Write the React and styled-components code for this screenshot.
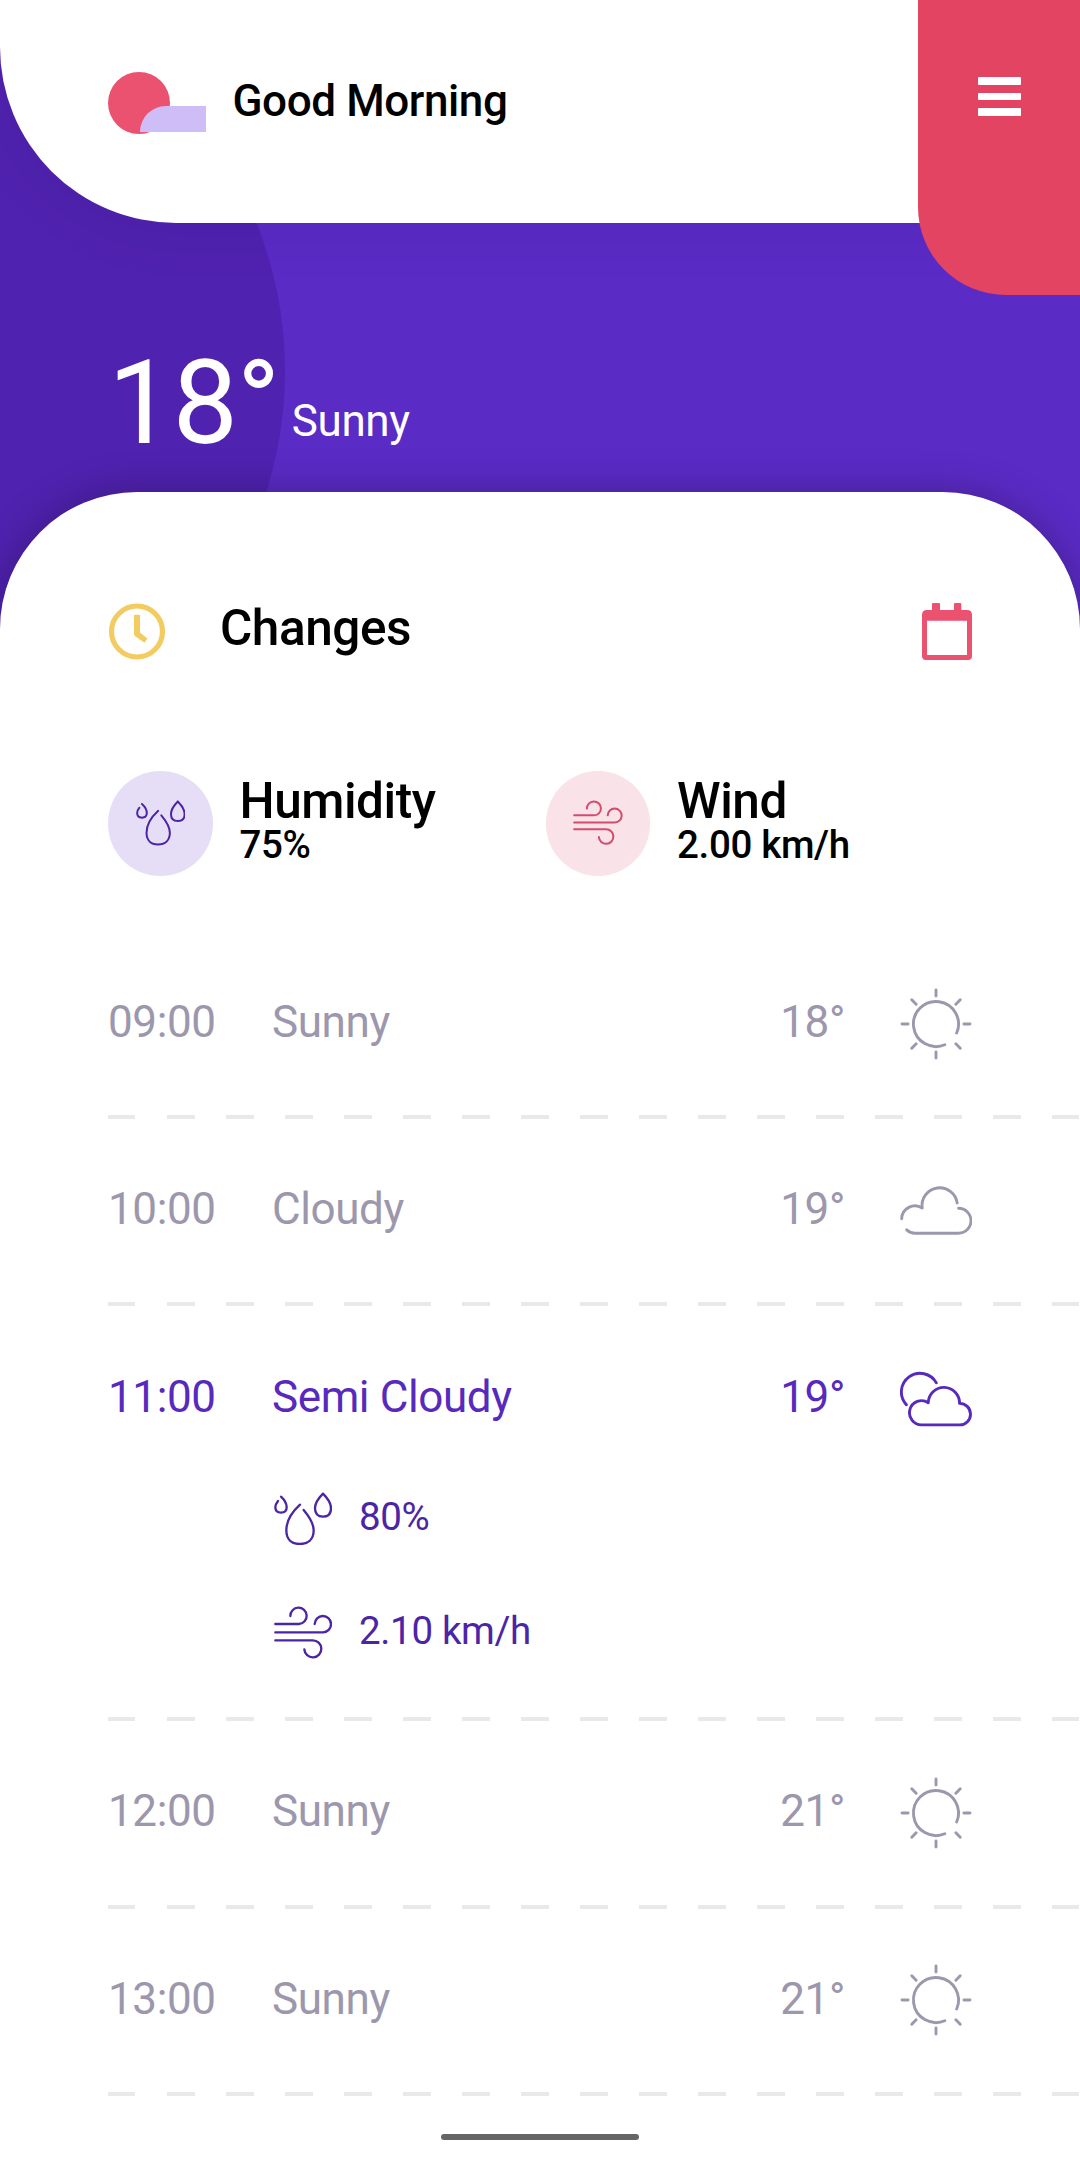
import React from "react";
import styled, { createGlobalStyle } from "styled-components";

const GlobalStyle = createGlobalStyle`
  * {
    box-sizing: border-box;
    letter-spacing: -0.009em;
  }
  body {
    margin: 0;
    font-family: Roboto, "Liberation Sans", sans-serif;
    background: #fff;
  }
`;

const Screen = styled.div`
  position: relative;
  width: 1080px;
  height: 2157px;
  overflow: hidden;
  display: flex;
  flex-direction: column;
  background: #5b2bc6;
`;

// big darker disc behind the temperature
const Disc = styled.div`
  position: absolute;
  left: -515px;
  top: -29px;
  width: 800px;
  height: 800px;
  border-radius: 50%;
  background: #5022b0;
`;

const Header = styled.header`
  position: relative;
  flex: none;
  height: 223px;
  padding: 72px 0 0 108px;
  display: flex;
  align-items: flex-start;
  background: #fff;
  border-bottom-left-radius: 176px;
  box-shadow: 0 8px 60px rgba(0, 0, 0, 0.07);
`;

const Logo = styled.svg`
  width: 98px;
  height: 62px;
  margin-right: 26.5px;
`;

const Greeting = styled.h1`
  margin: 2.5px 0 0;
  font-size: 44px;
  line-height: 52px;
  font-weight: 500;
  color: #000;
`;

const MenuButton = styled.button`
  position: absolute;
  top: 0;
  right: 0;
  width: 162px;
  height: 295px;
  padding: 77px 0 0 59.5px;
  display: flex;
  flex-direction: column;
  gap: 8px;
  border: none;
  background: #e24462;
  border-bottom-left-radius: 88px;
`;

const Bar = styled.span`
  width: 43px;
  height: 7.5px;
  border-radius: 1px;
  background: #fff;
`;

const Current = styled.section`
  position: relative;
  flex: none;
  height: 269px;
  padding: 109.5px 0 0 108px;
  display: flex;
  align-items: baseline;
  color: #fff;
`;

const Temp = styled.span`
  font-size: 116.5px;
  line-height: 140px;
`;

const Condition = styled.span`
  margin-left: 12.5px;
  font-size: 44px;
  transform: translateY(-7px);
`;

const Panel = styled.main`
  position: relative;
  flex: 1;
  padding-top: 111px;
  background: #fff;
  border-radius: 137px 137px 0 0;
  box-shadow: 0 0 40px rgba(0, 0, 0, 0.28);
`;

const PanelHead = styled.div`
  height: 58px;
  padding: 0 108px;
  display: flex;
  align-items: flex-start;
`;

const ClockIcon = styled.svg`
  width: 58px;
  height: 58px;
`;

const CalendarIcon = styled.svg`
  width: 50px;
  height: 58px;
  margin-left: auto;
`;

const Title = styled.h2`
  margin: -4px 0 0 54px;
  font-size: 49.5px;
  line-height: 58px;
  font-weight: 500;
`;

const Stats = styled.div`
  padding: 110px 108px 0;
  display: grid;
  grid-template-columns: 437.5px 1fr;
`;

const Stat = styled.div`
  display: flex;
  height: 104.5px;
`;

const Bubble = styled.div`
  width: 104.5px;
  height: 104.5px;
  margin-right: 27px;
  display: flex;
  align-items: center;
  justify-content: center;
  border-radius: 50%;
  background: ${(props) => props.$bg};
  color: ${(props) => props.$fg};
`;

const StatText = styled.div`
  padding-top: 8px;
  font-weight: 500;
  line-height: 44px;
`;

const StatName = styled.div`
  font-size: 49.5px;
`;

const StatValue = styled.div`
  font-size: 38.5px;
`;

const List = styled.div`
  padding: 56.35px 0 0 108px;
`;

const Item = styled.div`
  padding: 56px 0 0;
  color: ${(props) => (props.$active ? "#5729bd" : "#9c97ad")};
`;

const ItemRow = styled.div`
  height: 71.5px;
  padding: ${(props) => (props.$active ? "1.6px" : 0)} 108px 0 0;
  display: flex;
  align-items: center;
  font-size: 44px;
  line-height: 52px;
`;

const Time = styled.span`
  width: 164px;
  margin-top: -3.6px;
`;

const Label = styled.span`
  flex: 1;
  margin-top: -3.6px;
`;

const Degrees = styled.span`
  margin: -3.6px 55px 0 0;
`;

const ForecastIcon = styled.svg`
  width: 72px;
  height: 72px;
  fill: none;
  stroke: currentColor;
  stroke-width: 8.6;
  stroke-linecap: round;
  stroke-linejoin: round;
`;

const Details = styled.div`
  padding: 28px 0 0 166px;
  margin-bottom: -28px;
  color: #4c25a6;
`;

const Detail = styled.div`
  height: 114px;
  display: flex;
  align-items: center;
  gap: 27px;
  font-size: 38.5px;

  span {
    margin-top: -4px;
  }
`;

const LineIcon = styled.svg`
  width: ${(props) => props.$size}px;
  height: ${(props) => props.$size * 0.92}px;
  fill: none;
  stroke: currentColor;
  stroke-width: 7;
  stroke-linecap: round;
  stroke-linejoin: round;
`;

const Dashes = styled.div`
  height: 4px;
  margin-top: 55.7px;
  background: repeating-linear-gradient(
    90deg,
    #e9e9e9 0 27.5px,
    transparent 27.5px 59px
  );
`;

const HomeBar = styled.div`
  position: absolute;
  left: 441px;
  bottom: 17px;
  width: 198px;
  height: 6px;
  border-radius: 3px;
  background: #666;
`;

const Drops = ({ size }) => (
  <LineIcon $size={size} viewBox="0 0 174 160">
    <path d="M21 14C32 24 38 34 38 46C38 57 31 62 21 62C10 62 4 56 4 46C4 38 8 32 12 27" />
    <path d="M78 38C54 60 37 88 37 115C37 142 53 156 77 156C102 156 119 142 119 115C119 95 104 72 89 54" />
    <path d="M147 5C132 20 123 36 123 49C123 65 132 74 147 74C162 74 171 65 171 49C171 36 162 20 147 5Z" />
  </LineIcon>
);

const Wind = ({ size }) => (
  <LineIcon $size={size} viewBox="0 0 174 158">
    <path d="M4 53H75A24.5 24.5 0 1 0 49 29" />
    <path d="M4 78H147A24.5 24.5 0 1 0 122 53" />
    <path d="M4 102H116A25.5 25.5 0 1 1 91 129" />
  </LineIcon>
);

const icons = {
  sun: (
    <>
      <path d="M168.4 133.7A67 67 0 1 0 133.2 168.7" />
      <path d="M107 6V24M107 190V208M6 107H24M190 107H208" />
      <path d="M35 35L48 48M179 35L166 48M35 179L48 166M179 179L166 166" />
    </>
  ),
  cloud: (
    <>
      <path d="M5 130A39.5 39.5 0 0 1 66 98A52.5 52.5 0 0 1 170 83" />
      <path d="M174 99A37 37 0 0 1 174 173H44Q31 173 20 163" />
    </>
  ),
  semi: (
    <>
      <path d="M19 124A55.5 55.5 0 1 1 108 59" />
      <path d="M66 184A36 36 0 1 1 84 118A46.5 46.5 0 0 1 177 120A32 32 0 0 1 178 184Z" />
    </>
  ),
};

const hours = [
  { time: "09:00", label: "Sunny", temp: 18, icon: "sun" },
  { time: "10:00", label: "Cloudy", temp: 19, icon: "cloud" },
  {
    time: "11:00",
    label: "Semi Cloudy",
    temp: 19,
    icon: "semi",
    humidity: "80%",
    wind: "2.10 km/h",
  },
  { time: "12:00", label: "Sunny", temp: 21, icon: "sun" },
  { time: "13:00", label: "Sunny", temp: 21, icon: "sun" },
];

function Hour({ hour }) {
  const active = Boolean(hour.humidity);
  return (
    <Item $active={active}>
      <ItemRow $active={active}>
        <Time>{hour.time}</Time>
        <Label>{hour.label}</Label>
        <Degrees>{hour.temp}°</Degrees>
        <ForecastIcon viewBox="0 0 214 214">{icons[hour.icon]}</ForecastIcon>
      </ItemRow>
      {active && (
        <Details>
          <Detail>
            <Drops size={58} />
            <span>{hour.humidity}</span>
          </Detail>
          <Detail>
            <Wind size={58} />
            <span>{hour.wind}</span>
          </Detail>
        </Details>
      )}
      <Dashes />
    </Item>
  );
}

export default function App() {
  return (
    <>
      <GlobalStyle />
      <Screen>
        <Disc />
        <Header>
          <Logo viewBox="0 0 98 62">
            <circle cx="31" cy="31" r="31" fill="#ea5270" />
            <path d="M32 60A26 26 0 0 1 58 34H98V60Z" fill="#cfbdf8" />
          </Logo>
          <Greeting>Good Morning</Greeting>
          <MenuButton>
            <Bar />
            <Bar />
            <Bar />
          </MenuButton>
        </Header>
        <Current>
          <Temp>18°</Temp>
          <Condition>Sunny</Condition>
        </Current>
        <Panel>
          <PanelHead>
            <ClockIcon viewBox="0 0 58 58">
              <circle cx="29" cy="28.5" r="25.5" fill="none" stroke="#f2cb61" strokeWidth="5.2" />
              <path
                d="M27 11.7H31Q32 11.7 32 12.7V29.5L39.5 35.5L36.5 39.7L27.5 33.5Q26 32.4 26 31V12.7Q26 11.7 27 11.7Z"
                fill="#f2cb61"
              />
            </ClockIcon>
            <Title>Changes</Title>
            <CalendarIcon viewBox="0 0 50 58">
              <path
                d="M11 0H17Q18 0 18 1V7H32V1Q32 0 33 0H38.300Q39.300 0 39.300 1V7H45Q50 7 50 12V53Q50 57 46 57H4Q0 57 0 53V12Q0 7 5 7H10V1Q10 0 11 0ZM5 17.700V52H45V17.700Z"
                fill="#ea5270"
                fillRule="evenodd"
              />
            </CalendarIcon>
          </PanelHead>
          <Stats>
            <Stat>
              <Bubble $bg="#e6def6" $fg="#4c25a6">
                <Drops size={49.5} />
              </Bubble>
              <StatText>
                <StatName>Humidity</StatName>
                <StatValue>75%</StatValue>
              </StatText>
            </Stat>
            <Stat>
              <Bubble $bg="#f9e2e8" $fg="#d34b6d">
                <Wind size={49.5} />
              </Bubble>
              <StatText>
                <StatName>Wind</StatName>
                <StatValue>2.00 km/h</StatValue>
              </StatText>
            </Stat>
          </Stats>
          <List>
            {hours.map((hour) => (
              <Hour key={hour.time} hour={hour} />
            ))}
          </List>
        </Panel>
        <HomeBar />
      </Screen>
    </>
  );
}
